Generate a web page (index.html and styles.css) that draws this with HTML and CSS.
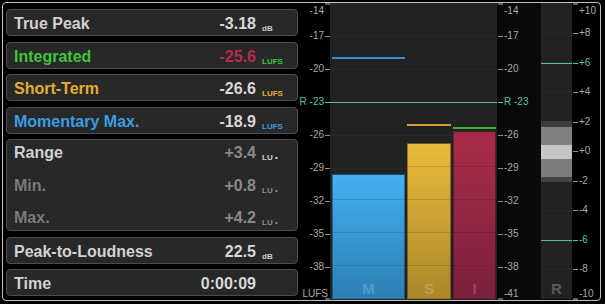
FILE: index.html
```html
<!DOCTYPE html>
<html>
<head>
    <meta content="text/html; charset=utf-8" http-equiv="Content-Type">
    <meta content="width=device-width, initial-scale=1" name="viewport">
    <link rel="stylesheet" href="styles.css">
    <title>Loudness</title>
</head>
<body>
    <div class="frame">
        <div class="stats">
            <div class="panel">
                <div class="row">
                    <span class="label">True Peak</span>
                    <span class="reading"><b class="val">-3.18</b><small class="unit">dB</small></span>
                </div>
            </div>
            <div class="panel">
                <div class="row integrated">
                    <span class="label">Integrated</span>
                    <span class="reading"><b class="val">-25.6</b><small class="unit">LUFS</small></span>
                </div>
            </div>
            <div class="panel">
                <div class="row short">
                    <span class="label">Short-Term</span>
                    <span class="reading"><b class="val">-26.6</b><small class="unit">LUFS</small></span>
                </div>
            </div>
            <div class="panel">
                <div class="row momentary">
                    <span class="label">Momentary Max.</span>
                    <span class="reading"><b class="val">-18.9</b><small class="unit">LUFS</small></span>
                </div>
            </div>
            <div class="panel group">
                <div class="row range">
                    <span class="label">Range</span>
                    <span class="reading"><b class="val">+3.4</b><small class="unit">LU •</small></span>
                </div>
                <div class="row range dim">
                    <span class="label">Min.</span>
                    <span class="reading"><b class="val">+0.8</b><small class="unit">LU •</small></span>
                </div>
                <div class="row range dim">
                    <span class="label">Max.</span>
                    <span class="reading"><b class="val">+4.2</b><small class="unit">LU •</small></span>
                </div>
            </div>
            <div class="panel">
                <div class="row">
                    <span class="label">Peak-to-Loudness</span>
                    <span class="reading"><b class="val">22.5</b><small class="unit">dB</small></span>
                </div>
            </div>
            <div class="panel">
                <div class="row">
                    <span class="label">Time</span>
                    <span class="reading"><b class="val">0:00:09</b><small class="unit"></small></span>
                </div>
            </div>
        </div>

        <!-- LUFS scale, left of the bars -->
        <div class="scale left-scale">
            <span class="cap top"></span>
            <span class="tick end" style="top:8px">-14</span>
            <span class="tick" style="top:33px">-17</span>
            <span class="tick" style="top:66px">-20</span>
            <span class="tick ref" style="top:99px">R -23</span>
            <span class="tick" style="top:132px">-26</span>
            <span class="tick" style="top:165px">-29</span>
            <span class="tick" style="top:198px">-32</span>
            <span class="tick" style="top:231px">-35</span>
            <span class="tick" style="top:264px">-38</span>
            <span class="tick end lufs" style="top:291px">LUFS</span>
            <span class="cap bottom"></span>
        </div>

        <div class="meter">
            <div class="bar m" style="height:125px"><i class="peak" style="top:-118px"></i><span>M</span></div>
            <div class="bar s" style="height:156px"><i class="peak" style="top:-20px"></i><span>S</span></div>
            <div class="bar i" style="height:168px"><i class="peak" style="top:-5px"></i><span>I</span></div>
            <div class="ref-line" style="top:99px"></div>
        </div>

        <div class="scale right-scale">
            <span class="cap top"></span>
            <span class="tick end" style="top:8px">-14</span>
            <span class="tick" style="top:33px">-17</span>
            <span class="tick" style="top:66px">-20</span>
            <span class="tick ref" style="top:99px">R -23</span>
            <span class="tick" style="top:132px">-26</span>
            <span class="tick" style="top:165px">-29</span>
            <span class="tick" style="top:198px">-32</span>
            <span class="tick" style="top:231px">-35</span>
            <span class="tick" style="top:264px">-38</span>
            <span class="tick end" style="top:291px">-41</span>
            <span class="cap bottom"></span>
        </div>

        <!-- loudness range bar -->
        <div class="rmeter">
            <div class="lra" style="margin-top:118px"></div>
            <div class="ref-line" style="top:60px"></div>
            <div class="ref-line" style="top:237px"></div>
            <span class="rlabel">R</span>
        </div>

        <div class="scale r-scale">
            <span class="cap top"></span>
            <span class="tick end" style="top:8px">+10</span>
            <span class="tick" style="top:30px">+8</span>
            <span class="tick ref" style="top:60px">+6</span>
            <span class="tick" style="top:89px">+4</span>
            <span class="tick" style="top:119px">+2</span>
            <span class="tick" style="top:148px">+0</span>
            <span class="tick" style="top:178px">-2</span>
            <span class="tick" style="top:207px">-4</span>
            <span class="tick ref" style="top:237px">-6</span>
            <span class="tick" style="top:266px">-8</span>
            <span class="tick end" style="top:291px">-10</span>
            <span class="cap bottom"></span>
        </div>
    </div>
</body>
</html>
```

FILE: styles.css
```css
* {
    box-sizing: border-box;
}

body {
    margin: 0;
    background: #000;
    font-family: "Liberation Sans", Arial, sans-serif;
}

.frame {
    display: flex;
    margin: 2px;
    width: 599px;
    height: 299px;
    border: 1px solid #c2c2c2;
    border-radius: 4px;
    background: #000;
    overflow: hidden;
}

/* readouts */
.stats {
    width: 295px;
    padding: 6px 0 4px 3px;
    display: flex;
    flex-direction: column;
    justify-content: space-between;
}

.panel {
    background: #282828;
    border: 1px solid #4d4d4d;
    border-radius: 4px;
    padding: 0 7px;
}

.group {
    display: flex;
    flex-direction: column;
    gap: 7.5px;
}

.row {
    display: flex;
    align-items: center;
    height: 25px;
    padding-top: 2px;
}

.group .row {
    padding-top: 0;
}

.label {
    flex: 1;
    font-size: 16px;
    font-weight: bold;
    line-height: 23px;
    color: #d2d2d2;
    white-space: nowrap;
}

.reading {
    line-height: 23px;
    white-space: nowrap;
}

.val {
    font-size: 16px;
    color: #d8d8d8;
}

.unit {
    display: inline-block;
    width: 28px;
    margin-left: 6px;
    font-size: 8px;
    font-weight: bold;
    line-height: 10px;
    vertical-align: -2px;
    color: #cdcdcd;
}

.integrated .label, .integrated .unit { color: #3ec53e; }
.integrated .val { color: #b22d4b; }
.short .label, .short .unit { color: #e4ad2f; }
.momentary .label, .momentary .unit { color: #399de3; }
.range .val { color: #8a8a8a; }
.range .unit { color: #d0d0d0; }
.dim .label { color: #7b7b7b; }
.dim .unit { color: #8c8c8c; }

/* scales */
.scale {
    position: relative;
    font-size: 10px;
    color: #a8a8a8;
}

.tick {
    position: absolute;
    left: 0;
    right: 0;
    height: 12px;
    margin-top: -6px;
    line-height: 12px;
    white-space: nowrap;
}

.tick::after {
    content: "";
    position: absolute;
    top: 6px;
    width: 5px;
    height: 1px;
    background: #8e8e8e;
}

.tick.end::after {
    display: none;
}

.tick.ref {
    color: #5cc3a3;
}

.tick.ref::after {
    background: #5cc3a3;
}

.cap {
    position: absolute;
    width: 5px;
    height: 2px;
    background: #5c5c5c;
}

.cap.top { top: 0; }
.cap.bottom { bottom: 0; }

.left-scale {
    width: 32px;
    text-align: right;
}

.left-scale .tick { padding-right: 6px; }
.left-scale .tick::after, .left-scale .cap { right: 0; }
.left-scale .lufs { padding-right: 2px; }

.right-scale {
    width: 44px;
    background: #090909;
}

.right-scale .tick, .r-scale .tick { padding-left: 7px; }
.right-scale .tick::after, .right-scale .cap,
.r-scale .tick::after, .r-scale .cap { left: 1px; }

.r-scale {
    width: 28px;
}

/* bars */
.meter {
    position: relative;
    width: 167px;
    display: flex;
    align-items: flex-end;
    gap: 2px;
    padding: 0 1px 1px 2px;
    background: repeating-linear-gradient(#222 0 32px, #292929 32px 33px) 0 1px;
}

.bar {
    position: relative;
    display: flex;
    flex-direction: column;
    justify-content: flex-end;
    align-items: center;
    padding-bottom: 2px;
    border: 1px solid rgba(0, 0, 0, 0.35);
    font-size: 15px;
    font-weight: bold;
    line-height: 15px;
    color: rgba(255, 255, 255, 0.2);
}

.bar.m {
    width: 73px;
    background: repeating-linear-gradient(to top, transparent 0 32px, rgba(0, 0, 0, 0.12) 32px 33px),
        linear-gradient(#44b0f0, #2d7eb5);
}

.bar.s {
    width: 44px;
    background: repeating-linear-gradient(to top, transparent 0 32px, rgba(0, 0, 0, 0.12) 32px 33px),
        linear-gradient(#e8bb3d, #ab872a);
}

.bar.i {
    width: 43px;
    background: repeating-linear-gradient(to top, transparent 0 32px, rgba(0, 0, 0, 0.12) 32px 33px),
        linear-gradient(#a92c4a, #7b203d);
}

.peak {
    position: absolute;
    left: -1px;
    right: -1px;
    height: 2px;
}

.m .peak { background: #3a8fd0; }
.s .peak { background: #d2a32f; }
.i .peak { background: #34b834; }

.ref-line {
    position: absolute;
    left: 0;
    right: 0;
    height: 1px;
    background: #55bf9f;
}

.rmeter {
    position: relative;
    width: 31px;
    margin-bottom: 1px;
    display: flex;
    flex-direction: column;
    background: repeating-linear-gradient(#222 0 28.6px, #292929 28.6px 29.6px) 0 1px;
}

.lra {
    height: 61px;
    background: linear-gradient(#3d3d3d 0 6px, #808080 6px 24px, #c6c6c6 24px 38px, #7d7d7d 38px 56px, #434343 56px 61px);
}

.rlabel {
    margin-top: auto;
    padding-bottom: 3px;
    text-align: center;
    font-size: 15px;
    font-weight: bold;
    line-height: 15px;
    color: #5a5a5a;
}
```
